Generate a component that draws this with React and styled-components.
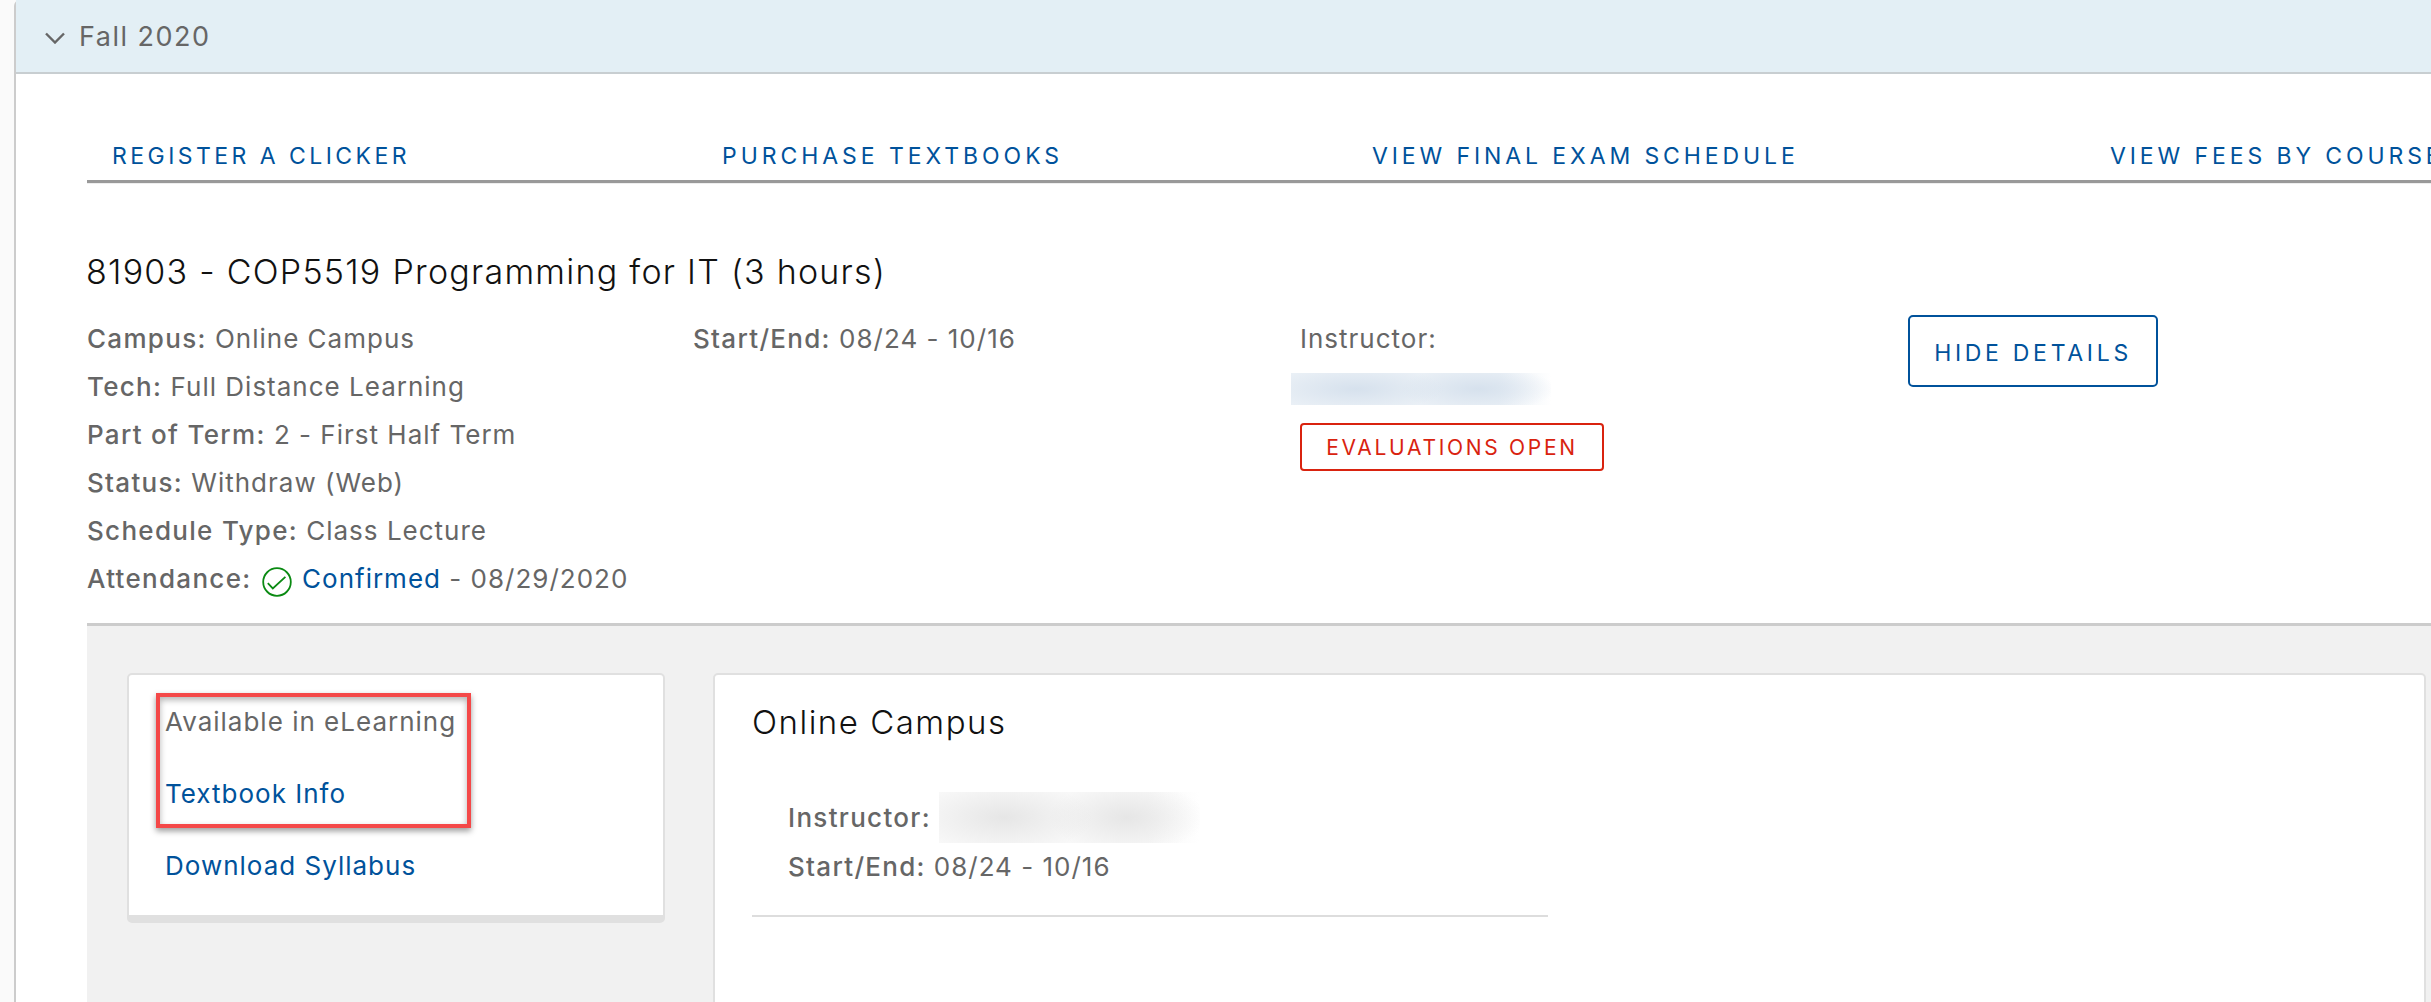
import React from "react";
import styled, { createGlobalStyle } from "styled-components";

const blue = "#00529b";
const grey = "#666666";

const GlobalStyle = createGlobalStyle`
  html, body {
    margin: 0;
    padding: 0;
    background: #fafafa;
  }
  body {
    font-family: Inter, "Liberation Sans", sans-serif;
    font-size: 26px;
    letter-spacing: 1px;
    color: ${grey};
  }
`;

const App = () => {
  return (
    <Page>
      <GlobalStyle />
      <Term>
        <TermHeader>
          <Chevron viewBox="0 0 20 12" fill="none">
            <path d="M1 1.5 L10 10.5 L19 1.5" stroke="#666" strokeWidth="2.4" />
          </Chevron>
          <TermName>Fall 2020</TermName>
        </TermHeader>
        <TermBody>
          <ActionBar>
            <ActionLink $width={610} $spacing={3.45}>REGISTER A CLICKER</ActionLink>
            <ActionLink $width={650} $spacing={3.95}>PURCHASE TEXTBOOKS</ActionLink>
            <ActionLink $width={738} $spacing={3.9}>VIEW FINAL EXAM SCHEDULE</ActionLink>
            <ActionLink $spacing={3.9}>VIEW FEES BY COURSE</ActionLink>
          </ActionBar>
          <CourseTitle>81903 - COP5519 Programming for IT (3 hours)</CourseTitle>
          <CourseInfo>
            <InfoColumn $width={606}>
              <InfoLine><Label>Campus:</Label> Online Campus</InfoLine>
              <InfoLine><Label>Tech:</Label> Full Distance Learning</InfoLine>
              <InfoLine><Label>Part of Term:</Label> 2 - First Half Term</InfoLine>
              <InfoLine><Label>Status:</Label> Withdraw (Web)</InfoLine>
              <InfoLine><Label>Schedule Type:</Label> Class Lecture</InfoLine>
              <InfoLine>
                <Label>Attendance:</Label>{" "}
                <CheckIcon viewBox="0 0 30 30" fill="none">
                  <circle cx="15" cy="15" r="13.8" stroke="#0a8a12" strokeWidth="1.8" />
                  <path d="M5.8 16.2 L10.8 21.4 L23.4 9.8" stroke="#0a8a12" strokeWidth="1.8" />
                </CheckIcon>{" "}
                <TextLink>Confirmed</TextLink> - 08/29/2020
              </InfoLine>
            </InfoColumn>
            <InfoColumn $width={607}>
              <InfoLine><Label>Start/End:</Label> 08/24 - 10/16</InfoLine>
            </InfoColumn>
            <InstructorColumn>
              <InfoLine>Instructor:</InfoLine>
              <InstructorName $tone="#d6e1ed" $base="#eaf0f6" $width={260} $height={32} />
              <EvalBadge>EVALUATIONS OPEN</EvalBadge>
            </InstructorColumn>
            <HideButton>HIDE DETAILS</HideButton>
          </CourseInfo>
          <DetailsPanel>
            <SideCard>
              <Highlighted>
                <SideLine>Available in eLearning</SideLine>
                <SideLine><TextLink>Textbook Info</TextLink></SideLine>
              </Highlighted>
              <SideLine><TextLink>Download Syllabus</TextLink></SideLine>
            </SideCard>
            <MainCard>
              <CardTitle>Online Campus</CardTitle>
              <MeetingInfo>
                <MeetingLine>
                  <Label>Instructor:</Label>
                  <BlurredName $tone="#e6e6e6" $base="#f8f8f8" $width={261} $height={51} />
                </MeetingLine>
                <MeetingLine><Label>Start/End:</Label>08/24 - 10/16</MeetingLine>
              </MeetingInfo>
              <Divider />
            </MainCard>
          </DetailsPanel>
        </TermBody>
      </Term>
    </Page>
  );
};

const Page = styled.div`
  width: 2431px;
  height: 1002px;
  overflow: hidden;
  padding-left: 14px;
  box-sizing: border-box;
`;

const Term = styled.div`
  width: 2500px;
  height: 1002px;
  border-left: 2px solid #cccccc;
  border-top-left-radius: 6px;
  background: #ffffff;
`;

const TermHeader = styled.div`
  display: flex;
  align-items: center;
  height: 72px;
  border-bottom: 2px solid #c8ced1;
  background: #e3eff5;
  padding-left: 29px;
`;

const Chevron = styled.svg`
  width: 20px;
  height: 12px;
  margin-top: 3px;
  margin-right: 14px;
`;

const TermName = styled.span`
  font-size: 27px;
  letter-spacing: 1.5px;
  color: ${grey};
`;

const TermBody = styled.div`
  padding-left: 71px;
`;

const ActionBar = styled.div`
  display: flex;
  align-items: center;
  box-sizing: border-box;
  height: 78px;
  margin-top: 31px;
  padding: 27px 0 0 25px;
  border-bottom: 3px solid #999999;
  box-shadow: 0 1px 0 #eeeeee;
`;

const ActionLink = styled.a`
  flex: none;
  width: ${(p) => (p.$width ? p.$width + "px" : "auto")};
  font-size: 23px;
  letter-spacing: ${(p) => p.$spacing}px;
  color: ${blue};
  white-space: nowrap;
`;

const CourseTitle = styled.h2`
  margin: 69px 0 0 -1px;
  font-size: 34px;
  line-height: 40px;
  font-weight: 300;
  letter-spacing: 1.25px;
  color: #111111;
`;

const CourseInfo = styled.div`
  display: flex;
  align-items: flex-start;
  margin-top: 23px;
`;

const InfoColumn = styled.div`
  flex: none;
  width: ${(p) => p.$width}px;
`;

const InstructorColumn = styled.div`
  flex: none;
  width: 608px;
  display: flex;
  flex-direction: column;
  align-items: flex-start;
`;

const InfoLine = styled.div`
  height: 48px;
  line-height: 48px;
  white-space: nowrap;
`;

const Label = styled.span`
  font-weight: 500;
  letter-spacing: 1.3px;
`;

const CheckIcon = styled.svg`
  width: 30px;
  height: 30px;
  margin: 0 2px;
  vertical-align: -9px;
`;

const TextLink = styled.a`
  color: ${blue};
`;

const BlurredName = styled.span`
  display: block;
  flex: none;
  width: ${(p) => p.$width}px;
  height: ${(p) => p.$height}px;
  background:
    radial-gradient(ellipse 34% 70% at 25% 50%, ${(p) => p.$tone}, transparent),
    radial-gradient(ellipse 30% 70% at 72% 50%, ${(p) => p.$tone}, transparent),
    linear-gradient(90deg, ${(p) => p.$base} 80%, #ffffff);
`;

const InstructorName = styled(BlurredName)`
  margin: 10px 0 0 -9px;
`;

const EvalBadge = styled.span`
  box-sizing: border-box;
  width: 304px;
  height: 48px;
  margin-top: 18px;
  display: flex;
  align-items: center;
  justify-content: center;
  border: 2px solid #d9230f;
  border-radius: 4px;
  font-size: 21px;
  letter-spacing: 2.7px;
  color: #d9230f;
`;

const HideButton = styled.button`
  flex: none;
  box-sizing: border-box;
  width: 250px;
  height: 72px;
  padding: 3px 0 0;
  background: #ffffff;
  border: 2px solid ${blue};
  border-radius: 5px;
  font-family: inherit;
  font-size: 23px;
  letter-spacing: 3.7px;
  color: ${blue};
`;

const DetailsPanel = styled.div`
  display: flex;
  align-items: flex-start;
  gap: 48px;
  height: 400px;
  margin-top: 20px;
  border-top: 3px solid #cccccc;
  background: #f1f1f1;
  padding: 47px 0 0 40px;
`;

const SideCard = styled.div`
  box-sizing: border-box;
  flex: none;
  width: 538px;
  height: 250px;
  padding: 11px 0 0 36px;
  background: #ffffff;
  border: 2px solid #e0e0e0;
  border-bottom-width: 8px;
  border-radius: 5px;
`;

const Highlighted = styled.div`
  position: relative;
  &::before {
    content: "";
    position: absolute;
    left: -9px;
    top: 7px;
    width: 315px;
    height: 135px;
    box-sizing: border-box;
    border: 4px solid #f44848;
    box-shadow: 0 3px 6px rgba(0, 0, 0, 0.4), inset 0 3px 6px rgba(0, 0, 0, 0.3);
    pointer-events: none;
  }
`;

const SideLine = styled.div`
  height: 72px;
  line-height: 72px;
  white-space: nowrap;
`;

const MainCard = styled.div`
  box-sizing: border-box;
  flex: none;
  width: 1713px;
  height: 360px;
  padding: 27px 0 0 37px;
  background: #ffffff;
  border: 2px solid #e0e0e0;
  border-radius: 5px;
`;

const CardTitle = styled.h3`
  margin: 0;
  font-size: 33px;
  line-height: 40px;
  font-weight: 300;
  letter-spacing: 1.5px;
  color: #111111;
`;

const MeetingInfo = styled.div`
  margin: 51px 0 0 36px;
`;

const MeetingLine = styled.div`
  display: flex;
  align-items: center;
  gap: 8px;
  height: 49px;
  white-space: pre;
`;

const Divider = styled.div`
  width: 796px;
  height: 2px;
  margin-top: 24px;
  background: #dddddd;
`;

export default App;
